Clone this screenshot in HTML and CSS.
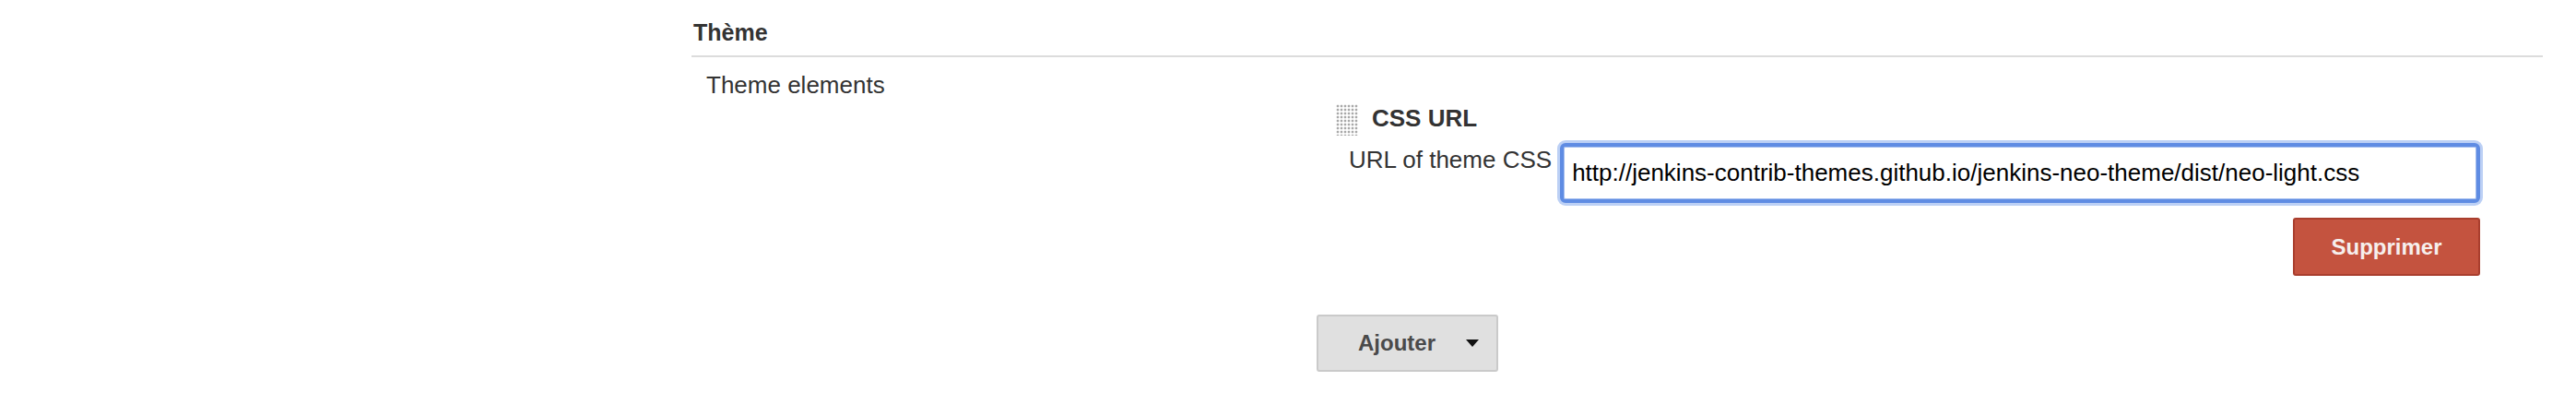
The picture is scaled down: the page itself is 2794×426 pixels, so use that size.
FILE: index.html
```html
<!DOCTYPE html>
<html lang="fr">
<head>
  <meta charset="UTF-8" />
  <title>Thème</title>
  <link rel="stylesheet" href="styles.css">
</head>
<body>
  <div class="main">
    <div class="section-header">Thème</div>

    <div class="setting-name">Theme elements</div>

    <div class="repeated">
      <div class="chunk">
        <div class="chunk-header">
          <span class="grip"></span>
          <span class="chunk-title">CSS URL</span>
        </div>

        <div class="field-row">
          <label class="field-label" for="css-url">URL of theme CSS</label>
          <input class="field-input" id="css-url" type="text"
                 value="http://jenkins-contrib-themes.github.io/jenkins-neo-theme/dist/neo-light.css">
        </div>

        <div class="delete-row">
          <button class="btn-delete">Supprimer</button>
        </div>
      </div>

      <button class="btn-add">
        <span>Ajouter</span>
        <span class="caret"></span>
      </button>
    </div>
  </div>
</body>
</html>
```

FILE: styles.css
```css
body {
  margin: 0;
  font-family: "Liberation Sans", Arial, Helvetica, sans-serif;
  font-size: 26px;
  color: #333;
  background: #fff;
}
.main {
  padding: 0 36px 0 750px;
}
.section-header {
  font-size: 25px;
  font-weight: bold;
  line-height: 30px;
  padding: 20px 0 10px 2px;
  border-bottom: 2px solid #dcdcdc;
}
.setting-name {
  line-height: 30px;
  margin-top: 15px;
  padding-left: 16px;
}
.repeated {
  margin: 6px 68px 0 678px;
}
.chunk {
  padding-left: 21px;
}
.chunk-header {
  display: flex;
  align-items: flex-start;
  gap: 15px;
}
.grip {
  width: 24px;
  height: 34px;
  background-image: radial-gradient(circle, #a9a9a9 1.1px, transparent 1.7px);
  background-size: 4px 4px;
}
.chunk-title {
  font-weight: bold;
  line-height: 30px;
}
.field-row {
  display: flex;
  align-items: flex-start;
  margin-top: 8px;
  padding-left: 14px;
}
.field-label {
  line-height: 30px;
  padding-top: 3px;
  margin-right: 9px;
  white-space: nowrap;
}
.field-input {
  flex: 1;
  box-sizing: border-box;
  height: 65px;
  margin: 0;
  padding: 0 9px;
  font-family: "Liberation Sans", Arial, Helvetica, sans-serif;
  font-size: 26px;
  color: #000;
  background: #fff;
  border: 4px solid #5f8ce3;
  border-radius: 6px;
  box-shadow: 0 0 0 3px #bcd0f5, inset 0 0 0 1px #a3bdef;
  outline: none;
}
.delete-row {
  display: flex;
  justify-content: flex-end;
  margin-top: 16px;
}
.btn-delete {
  width: 203px;
  height: 63px;
  font-family: "Liberation Sans", Arial, Helvetica, sans-serif;
  font-size: 24px;
  font-weight: bold;
  color: #f6efed;
  background: #c4533f;
  border: 2px solid #a93e2e;
  border-radius: 3px;
  cursor: pointer;
}
.btn-add {
  display: flex;
  align-items: center;
  gap: 33px;
  height: 62px;
  margin-top: 42px;
  padding: 0 19px 0 43px;
  font-family: "Liberation Sans", Arial, Helvetica, sans-serif;
  font-size: 24px;
  font-weight: bold;
  color: #4a4a4a;
  background: #e0e0e0;
  border: 2px solid #cacaca;
  border-radius: 3px;
  cursor: pointer;
}
.caret {
  width: 0;
  height: 0;
  border-left: 7.5px solid transparent;
  border-right: 7.5px solid transparent;
  border-top: 8px solid #111;
}
```
